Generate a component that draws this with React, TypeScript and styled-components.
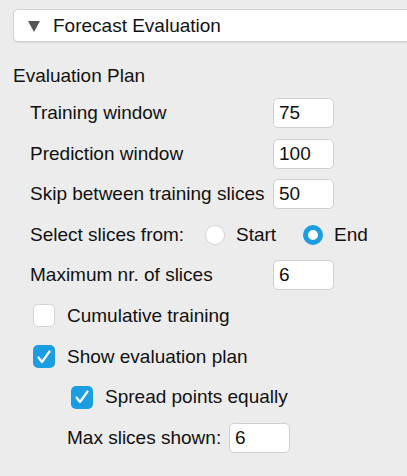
import styled, { createGlobalStyle } from "styled-components";

const Global = createGlobalStyle`
  body {
    margin: 0;
    background: #ececec;
    font-family: "Liberation Sans", Arial, sans-serif;
    color: #111;
    overflow: hidden;
  }
`;

const Page = styled.div`
  padding: 9px 0 0 13px;
`;

const Header = styled.div`
  display: flex;
  align-items: center;
  height: 31px;
  margin-right: -20px;
  background: #fff;
  border: 1px solid #d2d2d2;
  border-radius: 5px;
  box-shadow: 0 1px 1px rgba(0, 0, 0, 0.08);
  padding-left: 14px;
  gap: 13px;
  font-size: 19px;
`;

const Triangle = styled.span`
  width: 0;
  height: 0;
  border-left: 6px solid transparent;
  border-right: 6px solid transparent;
  border-top: 11px solid #555;
  margin-top: 2px;
`;

const Title = styled.div`
  margin-top: 23px;
  height: 22px;
  line-height: 22px;
  font-size: 19px;
`;

const List = styled.div<{ $indent: number }>`
  display: flex;
  flex-direction: column;
  gap: 10.6px;
  margin-top: 11px;
  padding-left: ${(p) => p.$indent}px;
`;

const Row = styled.div<{ $indent?: number }>`
  display: flex;
  align-items: center;
  height: 30px;
  font-size: 19px;
  padding-left: ${(p) => p.$indent ?? 0}px;
`;

const Label = styled.span<{ $width?: number }>`
  width: ${(p) => (p.$width ? `${p.$width}px` : "auto")};
  flex-shrink: 0;
  white-space: nowrap;
`;

const Input = styled.div`
  box-sizing: border-box;
  width: 61px;
  height: 30px;
  background: #fff;
  border: 1px solid #cfcfcf;
  border-radius: 5px;
  padding-left: 5px;
  display: flex;
  align-items: center;
  font-size: 19px;
  margin-left: 1px;
`;

const Radio = styled.span<{ $on?: boolean }>`
  box-sizing: border-box;
  width: 20px;
  height: 20px;
  border-radius: 50%;
  background: #fff;
  border: ${(p) => (p.$on ? "5.5px solid #1a9de1" : "1px solid #d4d4d4")};
  margin-right: 11px;
  flex-shrink: 0;
`;

const Box = styled.span<{ $on?: boolean }>`
  box-sizing: border-box;
  width: 22px;
  height: 23px;
  border-radius: 5px;
  background: ${(p) => (p.$on ? "#1a9de1" : "#fff")};
  border: ${(p) => (p.$on ? "none" : "1px solid #d4d4d4")};
  margin-right: 12px;
  display: flex;
  align-items: center;
  justify-content: center;
  flex-shrink: 0;
`;

const Check = () => (
  <svg width="16" height="16" viewBox="0 0 16 16">
    <path d="M2.5 8.5 L6 13 L13.5 2.5" fill="none" stroke="#fff" strokeWidth="2.2" strokeLinecap="round" strokeLinejoin="round" />
  </svg>
);

const Checkbox = ({ on }: { on?: boolean }) => <Box $on={on}>{on && <Check />}</Box>;

export default function App() {
  return (
    <Page>
      <Global />
      <Header>
        <Triangle />
        <span>Forecast Evaluation</span>
      </Header>
      <Title>Evaluation Plan</Title>
      <List $indent={17}>
        <Row>
          <Label $width={242}>Training window</Label>
          <Input>75</Input>
        </Row>
        <Row>
          <Label $width={242}>Prediction window</Label>
          <Input>100</Input>
        </Row>
        <Row>
          <Label $width={242}>Skip between training slices</Label>
          <Input>50</Input>
        </Row>
        <Row>
          <Label $width={175}>Select slices from:</Label>
          <Radio />
          <Label $width={67}>Start</Label>
          <Radio $on />
          <Label>End</Label>
        </Row>
        <Row>
          <Label $width={242}>Maximum nr. of slices</Label>
          <Input>6</Input>
        </Row>
        <Row $indent={3}>
          <Checkbox />
          <Label>Cumulative training</Label>
        </Row>
        <Row $indent={3}>
          <Checkbox on />
          <Label>Show evaluation plan</Label>
        </Row>
        <Row $indent={41}>
          <Checkbox on />
          <Label>Spread points equally</Label>
        </Row>
        <Row $indent={37}>
          <Label $width={161}>Max slices shown:</Label>
          <Input>6</Input>
        </Row>
      </List>
    </Page>
  );
}
